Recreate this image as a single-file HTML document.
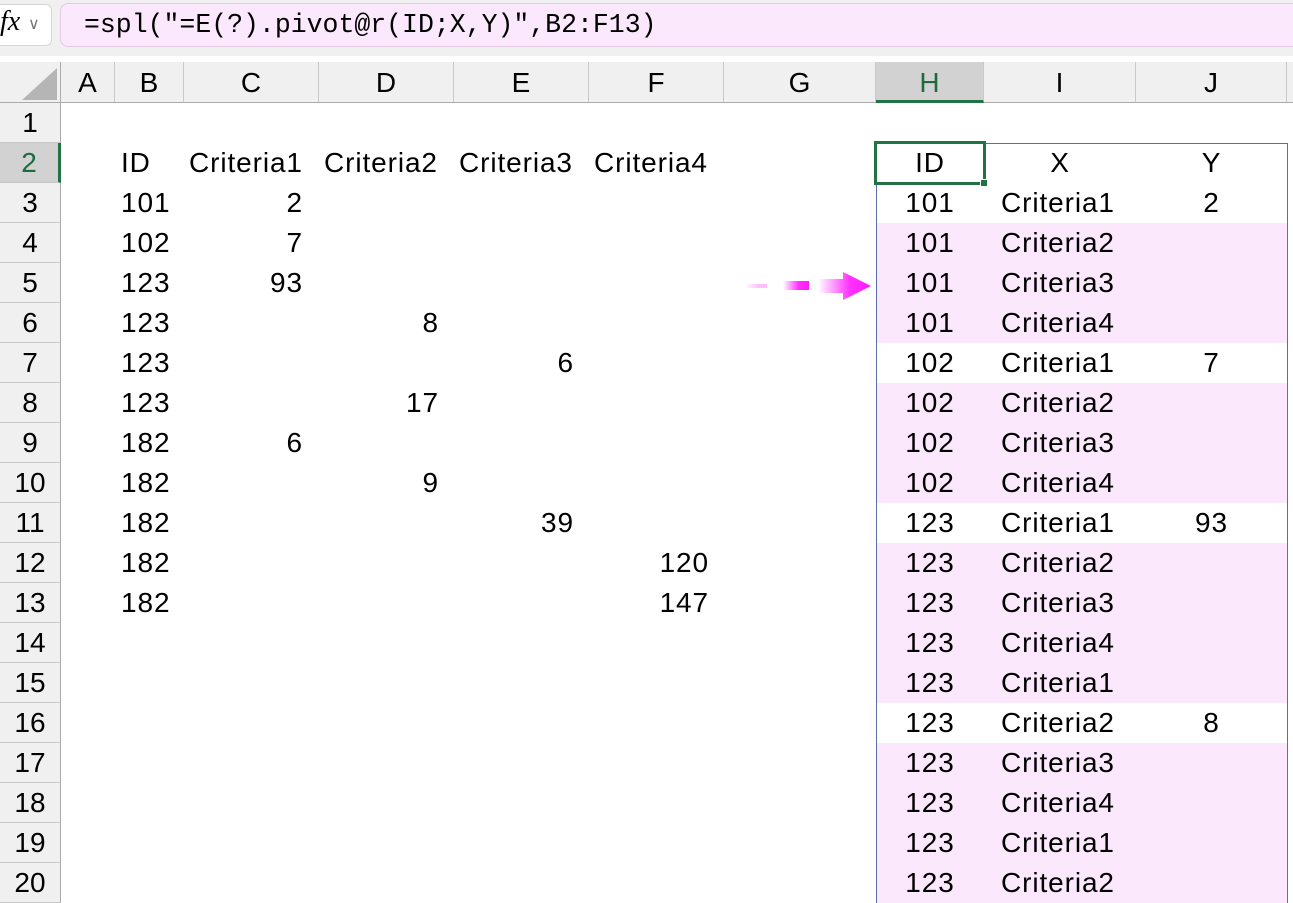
<!DOCTYPE html>
<html style="overflow:hidden"><head><meta charset="utf-8"><style>
html,body{overflow:hidden}
body{margin:0;width:1293px;height:903px;overflow:hidden;background:#fff;font-family:"Liberation Sans",sans-serif;position:relative}
div{position:absolute;box-sizing:border-box}
.t{font-size:28px;letter-spacing:0.9px;line-height:40px;height:40px;white-space:nowrap;color:#000}
.r{text-align:right}
.ch{top:62px;height:41px;line-height:41px;font-size:28px;text-align:center;background:#f0f0f0;border-right:1px solid #c8c8c8;border-bottom:1px solid #ababab}
.rh{left:0;width:61px;height:40px;line-height:40px;font-size:28px;text-align:center;background:#f0f0f0;border-right:1px solid #ababab;border-bottom:1px solid #c8c8c8}
.pk{background:#fce8fc;left:877px;width:410px;height:40px}
</style></head><body>
<div style="left:0;top:0;width:1293px;height:56px;background:#f0f0f0"></div>
<div style="left:-10px;top:4px;width:62px;height:42px;background:#fff;border:1px solid #d6d6d6;border-radius:6px"></div>
<div style="left:0;top:6px;font:italic 28px 'Liberation Serif',serif">fx</div>
<div style="left:28px;top:14px;font-size:16px;color:#777">&#8744;</div>
<div style="left:60px;top:3px;width:1240px;height:44px;background:#fce8fc;border:1px solid #e3c9e3;border-radius:8px"></div>
<div style="left:84px;top:8px;font:26.5px/34px 'Liberation Mono',monospace;color:#000;white-space:nowrap">=spl("=E(?).pivot@r(ID;X,Y)",B2:F13)</div>
<div style="left:0;top:62px;width:61px;height:41px;background:#f0f0f0;border-right:1px solid #ababab;border-bottom:1px solid #ababab"></div>
<div style="left:22px;top:68px;width:0;height:0;border-left:35px solid transparent;border-bottom:32px solid #b5b5b5"></div>
<div class="ch" style="left:61px;width:54px">A</div>
<div class="ch" style="left:115px;width:69px">B</div>
<div class="ch" style="left:184px;width:135px">C</div>
<div class="ch" style="left:319px;width:135px">D</div>
<div class="ch" style="left:454px;width:135px">E</div>
<div class="ch" style="left:589px;width:135px">F</div>
<div class="ch" style="left:724px;width:152px">G</div>
<div class="ch" style="left:876px;width:108px;background:#d2d2d2;color:#1e6b3e;border-bottom:3px solid #217346">H</div>
<div class="ch" style="left:984px;width:152px">I</div>
<div class="ch" style="left:1136px;width:151px">J</div>
<div class="ch" style="left:1287px;width:10px"></div>
<div class="rh" style="top:103px">1</div>
<div class="rh" style="top:143px;background:#d2d2d2;color:#1e6b3e;border-right:3px solid #217346">2</div>
<div class="rh" style="top:183px">3</div><div class="rh" style="top:223px">4</div>
<div class="rh" style="top:263px">5</div><div class="rh" style="top:303px">6</div>
<div class="rh" style="top:343px">7</div><div class="rh" style="top:383px">8</div>
<div class="rh" style="top:423px">9</div><div class="rh" style="top:463px">10</div>
<div class="rh" style="top:503px">11</div><div class="rh" style="top:543px">12</div>
<div class="rh" style="top:583px">13</div><div class="rh" style="top:623px">14</div>
<div class="rh" style="top:663px">15</div><div class="rh" style="top:703px">16</div>
<div class="rh" style="top:743px">17</div><div class="rh" style="top:783px">18</div>
<div class="rh" style="top:823px">19</div><div class="rh" style="top:863px;height:40px">20</div>
<div class="t" style="left:121px;top:143px">ID</div>
<div class="t" style="left:189px;top:143px">Criteria1</div>
<div class="t" style="left:324px;top:143px">Criteria2</div>
<div class="t" style="left:459px;top:143px">Criteria3</div>
<div class="t" style="left:594px;top:143px">Criteria4</div>
<div class="t" style="left:121px;top:183px">101</div>
<div class="t" style="left:121px;top:223px">102</div>
<div class="t" style="left:121px;top:263px">123</div>
<div class="t" style="left:121px;top:303px">123</div>
<div class="t" style="left:121px;top:343px">123</div>
<div class="t" style="left:121px;top:383px">123</div>
<div class="t" style="left:121px;top:423px">182</div>
<div class="t" style="left:121px;top:463px">182</div>
<div class="t" style="left:121px;top:503px">182</div>
<div class="t" style="left:121px;top:543px">182</div>
<div class="t" style="left:121px;top:583px">182</div>
<div class="t r" style="left:200px;width:103px;top:183px">2</div>
<div class="t r" style="left:200px;width:103px;top:223px">7</div>
<div class="t r" style="left:200px;width:103px;top:263px">93</div>
<div class="t r" style="left:330px;width:109px;top:303px">8</div>
<div class="t r" style="left:470px;width:104px;top:343px">6</div>
<div class="t r" style="left:330px;width:109px;top:383px">17</div>
<div class="t r" style="left:200px;width:103px;top:423px">6</div>
<div class="t r" style="left:330px;width:109px;top:463px">9</div>
<div class="t r" style="left:470px;width:104px;top:503px">39</div>
<div class="t r" style="left:600px;width:109px;top:543px">120</div>
<div class="t r" style="left:600px;width:109px;top:583px">147</div>
<svg style="position:absolute;left:740px;top:268px" width="135" height="36">
<defs><linearGradient id="g" x1="0" x2="1"><stop offset="0" stop-color="#ff1aff" stop-opacity="0"/><stop offset="0.6" stop-color="#ff1aff" stop-opacity="0.9"/><stop offset="1" stop-color="#ff1aff"/></linearGradient></defs>
<rect x="5" y="16" width="22" height="4" fill="url(#g)" opacity="0.3"/>
<rect x="43" y="13" width="26" height="9" fill="url(#g)"/>
<path d="M78 11 H103 V4 L131 18 L103 32 V25 H78 Z" fill="url(#g)"/>
</svg>
<div class="pk" style="top:223px;height:120px"></div>
<div class="pk" style="top:383px;height:120px"></div>
<div class="pk" style="top:543px;height:160px"></div>
<div class="pk" style="top:743px;height:160px"></div>
<div style="left:876px;top:143px;width:412px;height:770px;border:1px solid #5b6fae"></div>
<div style="left:874px;top:141px;width:112px;height:44px;border:3px solid #217346"></div>
<div style="left:980px;top:179px;width:8px;height:8px;background:#217346;border:1px solid #fff"></div>
<div class="t" style="left:876px;width:108px;text-align:center;top:143px">ID</div>
<div class="t" style="left:984px;width:152px;text-align:center;top:143px">X</div>
<div class="t" style="left:1136px;width:151px;text-align:center;top:143px">Y</div>
<div class="t" style="left:876px;width:108px;text-align:center;top:183px">101</div><div class="t" style="left:1001px;top:183px">Criteria1</div><div class="t" style="left:1136px;width:151px;text-align:center;top:183px">2</div>
<div class="t" style="left:876px;width:108px;text-align:center;top:223px">101</div><div class="t" style="left:1001px;top:223px">Criteria2</div>
<div class="t" style="left:876px;width:108px;text-align:center;top:263px">101</div><div class="t" style="left:1001px;top:263px">Criteria3</div>
<div class="t" style="left:876px;width:108px;text-align:center;top:303px">101</div><div class="t" style="left:1001px;top:303px">Criteria4</div>
<div class="t" style="left:876px;width:108px;text-align:center;top:343px">102</div><div class="t" style="left:1001px;top:343px">Criteria1</div><div class="t" style="left:1136px;width:151px;text-align:center;top:343px">7</div>
<div class="t" style="left:876px;width:108px;text-align:center;top:383px">102</div><div class="t" style="left:1001px;top:383px">Criteria2</div>
<div class="t" style="left:876px;width:108px;text-align:center;top:423px">102</div><div class="t" style="left:1001px;top:423px">Criteria3</div>
<div class="t" style="left:876px;width:108px;text-align:center;top:463px">102</div><div class="t" style="left:1001px;top:463px">Criteria4</div>
<div class="t" style="left:876px;width:108px;text-align:center;top:503px">123</div><div class="t" style="left:1001px;top:503px">Criteria1</div><div class="t" style="left:1136px;width:151px;text-align:center;top:503px">93</div>
<div class="t" style="left:876px;width:108px;text-align:center;top:543px">123</div><div class="t" style="left:1001px;top:543px">Criteria2</div>
<div class="t" style="left:876px;width:108px;text-align:center;top:583px">123</div><div class="t" style="left:1001px;top:583px">Criteria3</div>
<div class="t" style="left:876px;width:108px;text-align:center;top:623px">123</div><div class="t" style="left:1001px;top:623px">Criteria4</div>
<div class="t" style="left:876px;width:108px;text-align:center;top:663px">123</div><div class="t" style="left:1001px;top:663px">Criteria1</div>
<div class="t" style="left:876px;width:108px;text-align:center;top:703px">123</div><div class="t" style="left:1001px;top:703px">Criteria2</div><div class="t" style="left:1136px;width:151px;text-align:center;top:703px">8</div>
<div class="t" style="left:876px;width:108px;text-align:center;top:743px">123</div><div class="t" style="left:1001px;top:743px">Criteria3</div>
<div class="t" style="left:876px;width:108px;text-align:center;top:783px">123</div><div class="t" style="left:1001px;top:783px">Criteria4</div>
<div class="t" style="left:876px;width:108px;text-align:center;top:823px">123</div><div class="t" style="left:1001px;top:823px">Criteria1</div>
<div class="t" style="left:876px;width:108px;text-align:center;top:863px">123</div><div class="t" style="left:1001px;top:863px">Criteria2</div>
</body></html>
